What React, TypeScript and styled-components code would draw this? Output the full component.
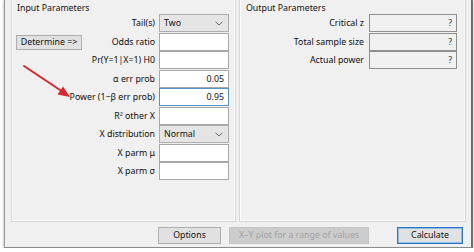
import React from "react";
import styled, { createGlobalStyle, css } from "styled-components";

const Global = createGlobalStyle`
  html, body { margin: 0; padding: 0; background: #ffffff; }
  body { font-family: "Noto Sans", "Segoe UI", sans-serif; font-size: 8.8px; color: #111; }
  * { box-sizing: border-box; }
`;

const Window = styled.div`
  position: relative;
  margin-left: 4px;
  width: 469px;
  height: 248px;
  background: #f0f0f0;
  border-left: 1px solid #9a9a9a;
  border-right: 2px solid #6f6f6f;
  border-bottom: 1px solid #8a8a8a;
  box-shadow: 0 2px 3px rgba(0, 0, 0, 0.18), -1px 0 1px rgba(0, 0, 0, 0.08);
  padding: 0 5px 3px 6px;
  display: flex;
  flex-direction: column;
`;

const Groups = styled.div`
  display: flex;
  gap: 3px;
  height: 222px;
`;

const Group = styled.div<{ $w: number; $pl: number; $pr: number }>`
  width: ${(p) => p.$w}px;
  flex: none;
  height: 100%;
  border: 1px solid #d6d6d6;
  border-top: none;
  box-shadow: inset 1px 0 0 #fbfbfb, inset -1px -1px 0 #fbfbfb;
  padding: 3px ${(p) => p.$pr}px 0 ${(p) => p.$pl}px;
  display: flex;
  flex-direction: column;
`;

const Title = styled.div<{ $ml?: number }>`
  font-size: 8.8px;
  line-height: 11px;
  height: 11px;
  margin-left: ${(p) => p.$ml ?? 0}px;
  color: #111;
`;

const Form = styled.div<{ $cols: string }>`
  display: grid;
  grid-template-columns: ${(p) => p.$cols};
  grid-auto-rows: 18px;
  row-gap: 0.56px;
`;

const Label = styled.div<{ $col: string; $pr: number }>`
  grid-column: ${(p) => p.$col};
  text-align: right;
  padding-right: ${(p) => p.$pr}px;
  line-height: 18px;
  white-space: nowrap;
  color: #0d0d0d;
  min-width: 0;
`;

const boxBase = css`
  height: 18px;
  line-height: 16px;
  padding: 0 4px;
  white-space: nowrap;
`;

const Field = styled.div<{ $focus?: boolean }>`
  ${boxBase};
  grid-column: 3;
  background: #ffffff;
  border: 1px solid ${(p) => (p.$focus ? "#4f93cf" : "#a8a8a8")};
  text-align: right;
`;

const Output = styled.div`
  ${boxBase};
  grid-column: 2;
  background: #f0f0f0;
  border: 1px solid #8e8e8e;
  text-align: right;
  color: #333;
`;

const Select = styled.div`
  ${boxBase};
  grid-column: 3;
  background: #e5e5e5;
  border: 1px solid #adadad;
  display: flex;
  align-items: center;
  justify-content: space-between;
  padding-right: 5px;
`;

const Button = styled.div<{ $w: number; $kind?: "default" | "disabled" }>`
  width: ${(p) => p.$w}px;
  flex: none;
  height: 17px;
  line-height: 15px;
  text-align: center;
  white-space: nowrap;
  overflow: hidden;
  background: #e1e1e1;
  border: 1px solid #adadad;
  color: #111;
  ${(p) =>
    p.$kind === "disabled" &&
    css`
      background: #cccccc;
      border-color: #c4c4c4;
      color: #a3a3a3;
    `}
  ${(p) =>
    p.$kind === "default" &&
    css`
      border-color: #2a78c4;
      box-shadow: inset 0 0 0 1px #8dbbe4;
    `}
`;

const Determine = styled(Button)`
  grid-column: 1;
  grid-row: 2;
  align-self: center;
  height: 15px;
  line-height: 13px;
  margin-top: 1px;
`;

const Bottom = styled.div`
  display: flex;
  align-items: center;
  margin-top: 5px;
  padding-left: 147px;
`;

const Gap = styled.div<{ $w: number }>`
  width: ${(p) => p.$w}px;
  flex: none;
`;

const Arrow = styled.svg`
  position: absolute;
  left: 0;
  top: 0;
  pointer-events: none;
`;

const Chevron = () => (
  <svg width="8" height="5" viewBox="0 0 8 5">
    <path d="M0.5 0.8 L4 4 L7.5 0.8" fill="none" stroke="#6a6a6a" strokeWidth="1" />
  </svg>
);

type Row =
  | { kind: "field"; label: string; value?: string; focus?: boolean }
  | { kind: "select"; label: string; value: string };

const inputRows: Row[] = [
  { kind: "select", label: "Tail(s)", value: "Two" },
  { kind: "field", label: "Odds ratio" },
  { kind: "field", label: "Pr(Y=1|X=1) H0" },
  { kind: "field", label: "α err prob", value: "0.05" },
  { kind: "field", label: "Power (1−β err prob)", value: "0.95", focus: true },
  { kind: "field", label: "R² other X" },
  { kind: "select", label: "X distribution", value: "Normal" },
  { kind: "field", label: "X parm μ" },
  { kind: "field", label: "X parm σ" },
];

const outputRows = ["Critical z", "Total sample size", "Actual power"];

export default function App() {
  return (
    <>
      <Global />
      <Window>
        <Groups>
          <Group $w={225} $pl={4} $pr={6}>
            <Title $ml={1}>Input Parameters</Title>
            <Form $cols="66px minmax(0, 1fr) 70px">
              <Determine $w={66}>Determine =&gt;</Determine>
              {inputRows.map((r, i) => (
                <React.Fragment key={r.label}>
                  <Label $col={i === 1 ? "2" : "1 / 3"} $pr={4} style={{ gridRow: i + 1 }}>
                    {r.label}
                  </Label>
                  {r.kind === "select" ? (
                    <Select style={{ gridRow: i + 1 }}>
                      <span>{r.value}</span>
                      <Chevron />
                    </Select>
                  ) : (
                    <Field $focus={r.focus} style={{ gridRow: i + 1 }}>
                      {r.value ?? ""}
                    </Field>
                  )}
                </React.Fragment>
              ))}
            </Form>
          </Group>
          <Group $w={227} $pl={6} $pr={8}>
            <Title>Output Parameters</Title>
            <Form $cols="minmax(0, 1fr) 88px">
              {outputRows.map((l) => (
                <React.Fragment key={l}>
                  <Label $col="1" $pr={5}>
                    {l}
                  </Label>
                  <Output>?</Output>
                </React.Fragment>
              ))}
            </Form>
          </Group>
        </Groups>
        <Bottom>
          <Button $w={63}>Options</Button>
          <Gap $w={8} />
          <Button $w={140} $kind="disabled">
            X–Y plot for a range of values
          </Button>
          <Gap $w={28} />
          <Button $w={66} $kind="default">
            Calculate
          </Button>
        </Bottom>
        <Arrow width="100" height="110" viewBox="0 0 100 110">
          <line x1="19" y1="66" x2="58" y2="92" stroke="#d9262b" strokeWidth="2" strokeLinecap="round" />
          <polygon points="65,97 52.5,94.5 58,86.5" fill="#d9262b" />
        </Arrow>
      </Window>
    </>
  );
}
